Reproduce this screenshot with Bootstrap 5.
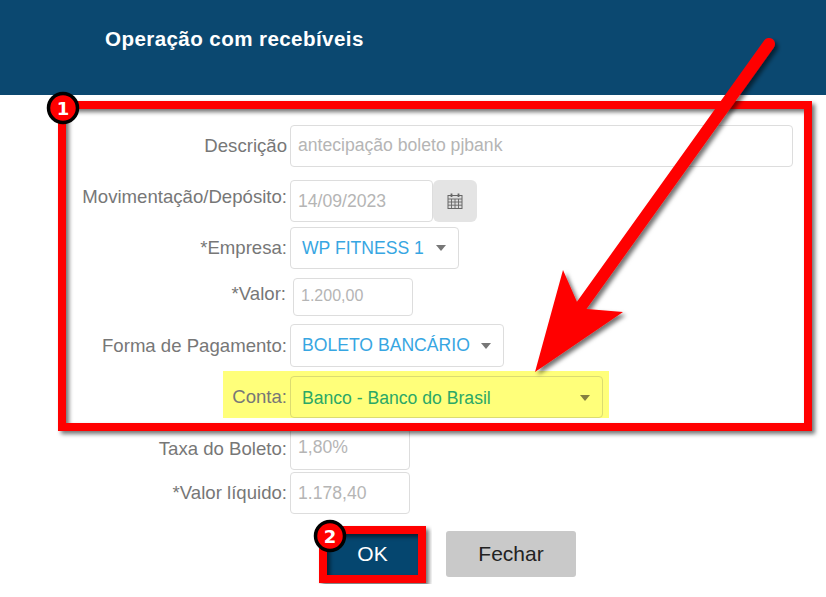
<!DOCTYPE html>
<html lang="pt-BR">
<head>
    <meta charset="UTF-8">
    <meta name="viewport" content="width=device-width, initial-scale=1.0">
    <title>Operação com recebíveis</title>
    <link href="https://cdn.jsdelivr.net/npm/bootstrap@5.3.0/dist/css/bootstrap.min.css" rel="stylesheet">
    <style>
        html, body { height: 597px; overflow: hidden; }
        body {
            position: relative;
            background: #fff;
            font-family: "Liberation Sans", Arial, sans-serif;
        }
        .op-header {
            height: 95px;
            background: #0b4870;
            padding: 27px 0 0 105px;
        }
        .op-title {
            margin: 0;
            color: #fff;
            font-size: 20.6px;
            line-height: 24px;
            font-weight: 700;
            letter-spacing: .4px;
        }
        .op-form { padding-top: 30px; }
        .op-row { display: flex; align-items: center; }
        .op-label {
            width: 287px;
            flex: none;
            text-align: right;
            color: #777;
            font-size: 18.6px;
            line-height: 24px;
            margin: 0;
        }
        .op-field {
            height: 42px;
            margin-left: 3px;
            padding: 0 7px;
            border: 1px solid #ddd;
            border-radius: 4px;
            background: transparent;
            display: flex;
            align-items: center;
            color: #b5b5b5;
            font-size: 17.6px;
        }
        .op-select {
            justify-content: space-between;
            padding: 0 12px 0 11px;
            color: #37a6e2;
        }
        .op-caret {
            width: 0;
            height: 0;
            border-left: 5.5px solid transparent;
            border-right: 5.5px solid transparent;
            border-top: 6px solid #777;
        }
        .op-addon {
            width: 44px;
            height: 42px;
            background: #e4e4e4;
            border-radius: 6px;
            display: flex;
            align-items: center;
            justify-content: center;
        }
        .op-desc { width: 503px; padding-bottom: 2px; }
        .op-date { width: 143px; }
        .op-empresa { width: 169px; }
        .op-forma { width: 214px; height: 43px; }
        .op-conta { width: 313px; color: #2ba866; padding-top: 2px; border-color: #dcdc70; }
        .op-conta .op-caret { border-top-color: #85803f; }
        .op-short { width: 120px; height: 38px; font-size: 16px; padding-bottom: 2px; }
        .op-rate { height: 42px; font-size: 17.6px; padding-bottom: 4px; }
        .op-rate-last { padding-bottom: 0; }
        .op-highlight {
            position: relative;
            z-index: 0;
        }
        .op-highlight::before {
            content: "";
            position: absolute;
            left: 223px;
            right: 217px;
            top: -5px;
            bottom: 0;
            background: #ffff7a;
            z-index: -1;
        }
        .op-actions {
            display: flex;
            justify-content: flex-start;
            padding-left: 327px;
            align-items: center;
        }
        .op-btn-ok, .op-btn-close {
            border: 0;
            font-size: 21px;
            line-height: 24px;
            padding: 0;
        }
        .op-btn-ok { width: 91px; height: 41px; background: #05466f; color: #fff; }
        .op-btn-close { width: 130px; height: 46px; margin-left: 28px; background: #c9c9c9; color: #222; border-radius: 3px; }
        .op-gap-13 { margin-bottom: 13px; }
        .op-gap-5 { margin-bottom: 5px; }
        .op-gap-9 { margin-bottom: 9px; }
        .op-gap-8 { margin-bottom: 8px; }
        .op-gap-10 { margin-bottom: 10px; }
        .op-gap-2 { margin-bottom: 2px; }
        .op-gap-17 { margin-bottom: 17px; }
        .op-valor-label { width: 286px; padding-bottom: 6px; }
        .op-valor-field { margin-left: 7px; }
        .op-overlay { position: absolute; left: 0; top: 0; width: 826px; height: 597px; pointer-events: none; }
        .op-overlay text { font-family: "DejaVu Sans", sans-serif; font-weight: 700; font-size: 18px; fill: #fff; text-anchor: middle; }
    </style>
</head>
<body>

<div class="op-header">
    <h5 class="op-title">Operação com recebíveis</h5>
</div>

<form class="op-form">
    <div class="op-row op-gap-13">
        <label class="op-label">Descrição</label>
        <div class="op-field op-desc">antecipação boleto pjbank</div>
    </div>
    <div class="op-row op-gap-5">
        <label class="op-label mb-2">Movimentação/Depósito:</label>
        <div class="op-field op-date">14/09/2023</div>
        <div class="op-addon">
            <svg width="16" height="16" viewBox="0 0 16 16" fill="none" stroke="#666">
                <rect x="1" y="2.5" width="14" height="13" fill="#ddd"/>
                <path d="M1 6h14M1 9h14M1 12.2h14M4.5 6v9.5M8 6v9.5M11.500 6v9.500" stroke-width=".9"/>
                <path d="M4.500 .5v3.500M11.500 .5v3.500" stroke-width="1.800"/>
            </svg>
        </div>
    </div>
    <div class="op-row op-gap-9">
        <label class="op-label">*Empresa:</label>
        <div class="op-field op-select op-empresa"><span>WP FITNESS 1</span><span class="op-caret"></span></div>
    </div>
    <div class="op-row op-gap-8">
        <label class="op-label op-valor-label">*Valor:</label>
        <div class="op-field op-short op-valor-field">1.200,00</div>
    </div>
    <div class="op-row op-gap-9">
        <label class="op-label">Forma de Pagamento:</label>
        <div class="op-field op-select op-forma"><span>BOLETO BANCÁRIO</span><span class="op-caret"></span></div>
    </div>
    <div class="op-row op-highlight op-gap-10">
        <label class="op-label">Conta:</label>
        <div class="op-field op-select op-conta"><span>Banco - Banco do Brasil</span><span class="op-caret"></span></div>
    </div>
    <div class="op-row op-gap-2">
        <label class="op-label">Taxa do Boleto:</label>
        <div class="op-field op-short op-rate">1,80%</div>
    </div>
    <div class="op-row op-gap-17">
        <label class="op-label">*Valor líquido:</label>
        <div class="op-field op-short op-rate op-rate-last">1.178,40</div>
    </div>
    <div class="op-actions">
        <button type="button" class="op-btn-ok">OK</button>
        <button type="button" class="op-btn-close">Fechar</button>
    </div>
</form>

<svg class="op-overlay" viewBox="0 0 826 597">
    <defs>
        <filter id="op-shadow" x="-10%" y="-10%" width="120%" height="120%">
            <feDropShadow dx="3" dy="3" stdDeviation="2" flood-color="#000" flood-opacity=".55"/>
        </filter>
    </defs>
    <rect x="62" y="105" width="746" height="322" fill="none" stroke="#f00" stroke-width="8" filter="url(#op-shadow)"/>
    <g filter="url(#op-shadow)">
        <line x1="769" y1="44" x2="582" y2="305" stroke="#f00" stroke-width="12" stroke-linecap="round"/>
        <polygon points="535,372 563,270 577,302 587,309 623,312" fill="#f00"/>
    </g>
    <rect x="323" y="530" width="99" height="49" fill="none" stroke="#f00" stroke-width="8" filter="url(#op-shadow)"/>
    <circle cx="63" cy="108" r="14.5" fill="#f00" stroke="#000" stroke-width="3.5"/>
    <text x="63" y="115">1</text>
    <circle cx="330" cy="536" r="14.5" fill="#f00" stroke="#000" stroke-width="3.5"/>
    <text x="330" y="543">2</text>
</svg>

<script src="https://cdn.jsdelivr.net/npm/bootstrap@5.3.0/dist/js/bootstrap.bundle.min.js"></script>
</body>
</html>
